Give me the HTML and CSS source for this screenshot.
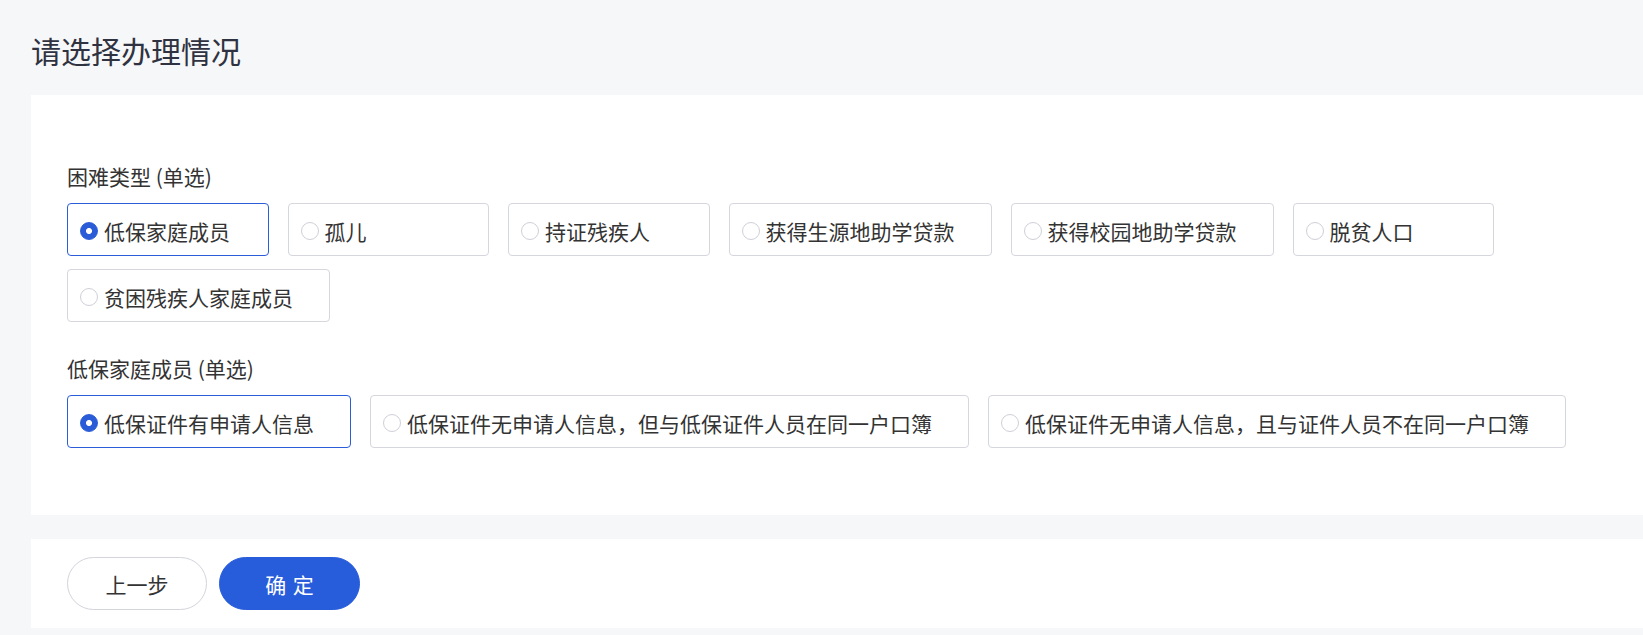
FILE: index.html
```html
<!DOCTYPE html>
<html lang="zh-CN">
<head>
<meta charset="utf-8">
<title>请选择办理情况</title>
<link rel="stylesheet" href="styles.css">
</head>
<body>
<div class="page">
  <h1 class="title">请选择办理情况</h1>
  <section class="panel form-panel">
    <div class="group">
      <div class="group-label">困难类型 (单选)</div>
      <div class="options">
        <label class="option checked"><span class="radio"></span><span class="option-text">低保家庭成员</span></label>
        <label class="option"><span class="radio"></span><span class="option-text">孤儿</span></label>
        <label class="option"><span class="radio"></span><span class="option-text">持证残疾人</span></label>
        <label class="option"><span class="radio"></span><span class="option-text">获得生源地助学贷款</span></label>
        <label class="option"><span class="radio"></span><span class="option-text">获得校园地助学贷款</span></label>
        <label class="option"><span class="radio"></span><span class="option-text">脱贫人口</span></label>
        <label class="option"><span class="radio"></span><span class="option-text">贫困残疾人家庭成员</span></label>
      </div>
    </div>
    <div class="group">
      <div class="group-label">低保家庭成员 (单选)</div>
      <div class="options">
        <label class="option checked"><span class="radio"></span><span class="option-text">低保证件有申请人信息</span></label>
        <label class="option"><span class="radio"></span><span class="option-text">低保证件无申请人信息，但与低保证件人员在同一户口簿</span></label>
        <label class="option"><span class="radio"></span><span class="option-text">低保证件无申请人信息，且与证件人员不在同一户口簿</span></label>
      </div>
    </div>
  </section>
  <section class="panel action-panel">
    <button class="btn btn-default" type="button">上一步</button>
    <button class="btn btn-primary" type="button">确 定</button>
  </section>
</div>
</body>
</html>
```
FILE: styles.css
```css
html, body {
  margin: 0;
  padding: 0;
  background: #f6f7f9;
}

body {
  font-family: "Noto Sans CJK SC", "Noto Sans", sans-serif;
  color: #333333;
}

.page {
  padding: 30px 0 7px 31px;
}

.title {
  margin: 0;
  font-size: 30px;
  line-height: 40px;
  font-weight: 400;
  color: #2f3240;
}

.panel {
  background: #ffffff;
}

.form-panel {
  margin-top: 25px;
  padding: 66px 36px 67px 36px;
  display: flex;
  flex-direction: column;
  gap: 31px;
}

.group-label {
  font-size: 21px;
  line-height: 30px;
  color: #333333;
  margin-bottom: 12px;
}

.options {
  display: flex;
  flex-wrap: wrap;
  column-gap: 19px;
  row-gap: 13px;
}

.option {
  box-sizing: border-box;
  display: flex;
  align-items: center;
  gap: 6px;
  height: 53px;
  min-width: 201.5px;
  padding: 2px 36px 0 12px;
  border: 1px solid #d5d6de;
  border-radius: 4px;
  font-size: 21px;
  color: #333333;
  background: #ffffff;
  cursor: pointer;
}

.option.checked {
  border-color: #2b5dd9;
}

.radio {
  box-sizing: border-box;
  flex: none;
  width: 18px;
  height: 18px;
  border-radius: 50%;
  border: 1px solid #cfd0d8;
  background: #ffffff;
}

.option.checked .radio {
  border-color: #2a5cd8;
  background: radial-gradient(circle, #ffffff 0, #ffffff 2.6px, #2a5cd8 3.4px);
}

.option-text {
  white-space: nowrap;
  line-height: 30px;
}

.action-panel {
  margin-top: 24px;
  padding: 18px 36px;
  display: flex;
  gap: 12px;
}

.btn {
  box-sizing: border-box;
  height: 53px;
  border-radius: 27px;
  font-family: inherit;
  font-size: 21px;
  padding: 0;
  cursor: pointer;
}

.btn-default {
  width: 140px;
  background: #ffffff;
  border: 1px solid #d3d4dc;
  color: #333333;
}

.btn-primary {
  width: 141px;
  background: #275cdb;
  border: 1px solid #275cdb;
  color: #ffffff;
  word-spacing: 2px;
}
```
